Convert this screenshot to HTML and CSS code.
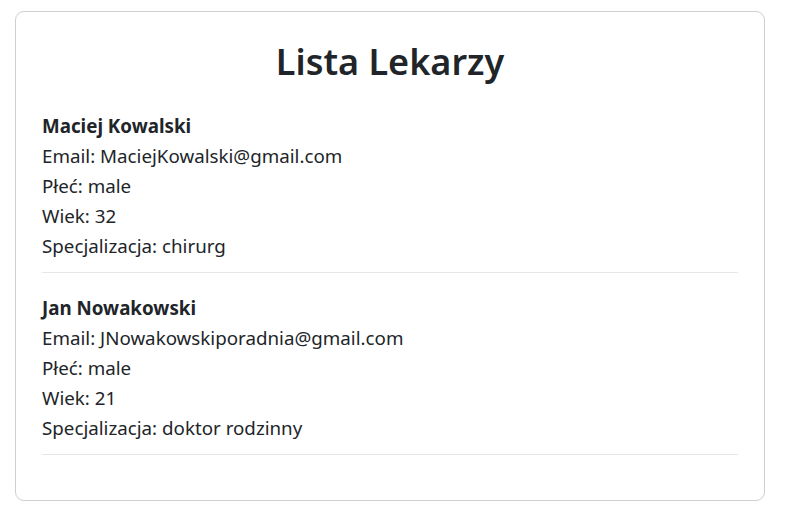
FILE: index.html
```html
<!DOCTYPE html>
<html lang="pl">
<head>
<meta charset="utf-8">
<title>Lista Lekarzy</title>
<link rel="stylesheet" href="styles.css">
</head>
<body>
<main class="card">
  <h1 class="title">Lista Lekarzy</h1>
  <ul class="doctors">
    <li class="doctor">
      <div class="name">Maciej Kowalski</div>
      <div class="line">Email: MaciejKowalski@gmail.com</div>
      <div class="line">Płeć: male</div>
      <div class="line">Wiek: 32</div>
      <div class="line">Specjalizacja: chirurg</div>
    </li>
    <li class="doctor">
      <div class="name">Jan Nowakowski</div>
      <div class="line">Email: JNowakowskiporadnia@gmail.com</div>
      <div class="line">Płeć: male</div>
      <div class="line">Wiek: 21</div>
      <div class="line">Specjalizacja: doktor rodzinny</div>
    </li>
  </ul>
</main>
</body>
</html>
```
FILE: styles.css
```css
html, body {
  margin: 0;
  padding: 0;
  background: #ffffff;
}
body {
  padding: 11px 21px 0 15px;
  font-family: "Noto Sans", "Open Sans", sans-serif;
  color: #212529;
}
.card {
  box-sizing: border-box;
  height: 490px;
  border: 1px solid #cfcfcf;
  border-radius: 9px;
  padding: 28px 25px 44px;
}
.title {
  margin: 0 0 8px;
  text-align: center;
  font-size: 36px;
  line-height: 43px;
  font-weight: 600;
}
.doctors {
  list-style: none;
  margin: 0 1px;
  padding: 0;
}
.doctor {
  padding: 20px 0 11px;
  border-bottom: 1px solid #e6e6e6;
  font-size: 18.75px;
  line-height: 30px;
}
.name {
  font-weight: 700;
}
```
